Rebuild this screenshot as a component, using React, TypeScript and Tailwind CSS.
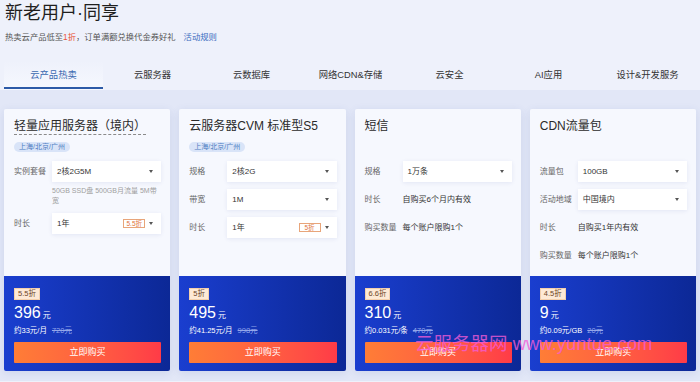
import React from "react";

type Row =
  | { kind: "select"; label: string; value: string; badge?: string; desc?: string }
  | { kind: "text"; label: string; value: string };

type Card = {
  title: string;
  dashed?: boolean;
  tag?: boolean;
  rows: Row[];
  off: string;
  price: string;
  sub: string;
  orig: string;
};

const cards: Card[] = [
  {
    title: "轻量应用服务器（境内）",
    dashed: true,
    tag: true,
    rows: [
      { kind: "select", label: "实例套餐", value: "2核2G5M", desc: "50GB SSD盘 500GB月流量 5M带宽" },
      { kind: "select", label: "时长", value: "1年", badge: "5.5折" },
    ],
    off: "5.5折",
    price: "396",
    sub: "约33元/月",
    orig: "720元",
  },
  {
    title: "云服务器CVM 标准型S5",
    tag: true,
    rows: [
      { kind: "select", label: "规格", value: "2核2G" },
      { kind: "select", label: "带宽", value: "1M" },
      { kind: "select", label: "时长", value: "1年", badge: "5折" },
    ],
    off: "5折",
    price: "495",
    sub: "约41.25元/月",
    orig: "998元",
  },
  {
    title: "短信",
    rows: [
      { kind: "select", label: "规格", value: "1万条" },
      { kind: "text", label: "时长", value: "自购买6个月内有效" },
      { kind: "text", label: "购买数量", value: "每个账户限购1个" },
    ],
    off: "6.6折",
    price: "310",
    sub: "约0.031元/条",
    orig: "470元",
  },
  {
    title: "CDN流量包",
    rows: [
      { kind: "select", label: "流量包", value: "100GB" },
      { kind: "select", label: "活动地域", value: "中国境内" },
      { kind: "text", label: "时长", value: "自购买1年内有效" },
      { kind: "text", label: "购买数量", value: "每个账户限购1个" },
    ],
    off: "4.5折",
    price: "9",
    sub: "约0.09元/GB",
    orig: "20元",
  },
];

const tabs = ["云产品热卖", "云服务器", "云数据库", "网络CDN&存储", "云安全", "AI应用", "设计&开发服务"];

function Caret() {
  return <span className="ml-[4px] w-0 h-0 border-l-[2.5px] border-r-[2.5px] border-t-[3px] border-x-transparent border-t-[#555]" />;
}

function CardView({ c }: { c: Card }) {
  return (
    <div className="flex-1 h-[262px] flex flex-col rounded-[2px] overflow-hidden shadow-[0_2px_8px_rgba(60,80,160,0.12)]">
      <div className="flex-1 bg-[#f6f8fe] pl-[10px] pr-[9px]">
        <div className="h-[52px] pt-[10px] flex flex-col items-start">
          <div
            className={
              "h-[16px] text-[12px] leading-[15px] text-[#2a2a2a] whitespace-nowrap " +
              (c.dashed ? "border-b border-dashed border-[#8a8a8a]" : "")
            }
          >
            {c.title}
          </div>
          {c.tag && (
            <div className="mt-[7px] h-[10px] flex items-center rounded-full bg-[#d9e4f8] px-[5px] text-[7px] leading-[10px] text-[#4d7cc2]">
              上海/北京/广州
            </div>
          )}
        </div>
        <div className="flex flex-col gap-[7px]">
          {c.rows.map((r, i) => (
            <div key={i} className="flex items-start">
              <div className="w-[38px] shrink-0 text-[8px] leading-[21px] text-[#666] whitespace-nowrap">{r.label}</div>
              <div className="flex-1 min-w-0">
                {r.kind === "select" ? (
                  <>
                    <div className="h-[21px] bg-white shadow-[0_1px_4px_rgba(60,80,160,0.10)] flex items-center pl-[5px] pr-[8px]">
                      <span className="flex-1 text-[8px] text-[#333]">{r.value}</span>
                      {r.badge && (
                        <span className="min-w-[22px] h-[9px] px-[2px] border border-[#e8a57a] text-[#e0733a] text-[6.5px] leading-[7px] text-center">
                          {r.badge}
                        </span>
                      )}
                      <Caret />
                    </div>
                    {r.desc && (
                      <div className="mt-[4px] text-[7px] leading-[10px] text-[#a0a0a0] pr-[4px]">{r.desc}</div>
                    )}
                  </>
                ) : (
                  <div className="text-[8px] leading-[21px] text-[#333]">{r.value}</div>
                )}
              </div>
            </div>
          ))}
        </div>
      </div>
      <div className="h-[95px] bg-gradient-to-r from-[#1a3ecf] to-[#0c2896] pl-[10px] pr-[9px] pt-[12px] flex flex-col items-stretch">
        <div className="flex">
          <span className="flex items-center h-[12px] px-[3px] bg-[#fde9d6] border border-[#f3cfac] text-[7.5px] leading-[10px] text-[#6e4526]">
            {c.off}
          </span>
        </div>
        <div className="mt-[3px] h-[20px] flex items-baseline text-white">
          <span className="text-[16px] leading-[20px]">{c.price}</span>
          <span className="ml-[2px] text-[8px]">元</span>
        </div>
        <div className="mt-[3px] h-[10px] text-[7.5px] leading-[10px] text-white whitespace-nowrap">
          {c.sub}
          <span className="ml-[5px] line-through text-[#93a6ea]">{c.orig}</span>
        </div>
        <div className="mt-[6px] h-[21px] rounded-[1px] bg-gradient-to-r from-[#ff7d36] to-[#ff3b47] text-white text-[9px] flex items-center justify-center">
          立即购买
        </div>
      </div>
    </div>
  );
}

export default function App() {
  return (
    <div className="relative w-[700px] h-[382px] overflow-hidden bg-[#eef1fb] font-['Liberation_Sans','Noto_Sans_CJK_SC',sans-serif]">
      <div className="pl-[5px] pt-[1px]">
        <div className="text-[18px] leading-[24px] text-[#1f1f1f]">新老用户·同享</div>
        <div className="mt-[5px] text-[8.3px] leading-[14px] text-[#555] whitespace-nowrap">
          热卖云产品低至<span className="text-[#e8553a]">1折</span>，订单满额兑换代金券好礼
          <span className="ml-[8px] text-[#3b6cc0]">活动规则</span>
        </div>
      </div>
      <div className="mt-[17px] flex h-[29px] pl-[4px]">
        {tabs.map((t, i) => (
          <div
            key={t}
            className={
              "relative w-[99px] flex items-center justify-center text-[9.3px] " +
              (i === 0 ? "text-[#3a68b0] bg-gradient-to-b from-[#eef1fb] to-[#f6f8fe]" : "text-[#333]")
            }
          >
            {t}
            {i === 0 && <div className="absolute left-0 right-0 bottom-[1px] h-[2px] bg-[#2c5aa7]" />}
          </div>
        ))}
      </div>
      <div className="h-[291px] bg-[#e2e7f7] flex gap-[9px] px-[4px] pt-[19px]">
        {cards.map((c) => (
          <CardView key={c.title} c={c} />
        ))}
      </div>
      <div className="absolute left-[415px] top-[332px] text-[18.5px] leading-[24px] whitespace-nowrap text-[rgba(244,92,214,0.8)]">
        云服务器网 www.yuntue.com
      </div>
    </div>
  );
}
